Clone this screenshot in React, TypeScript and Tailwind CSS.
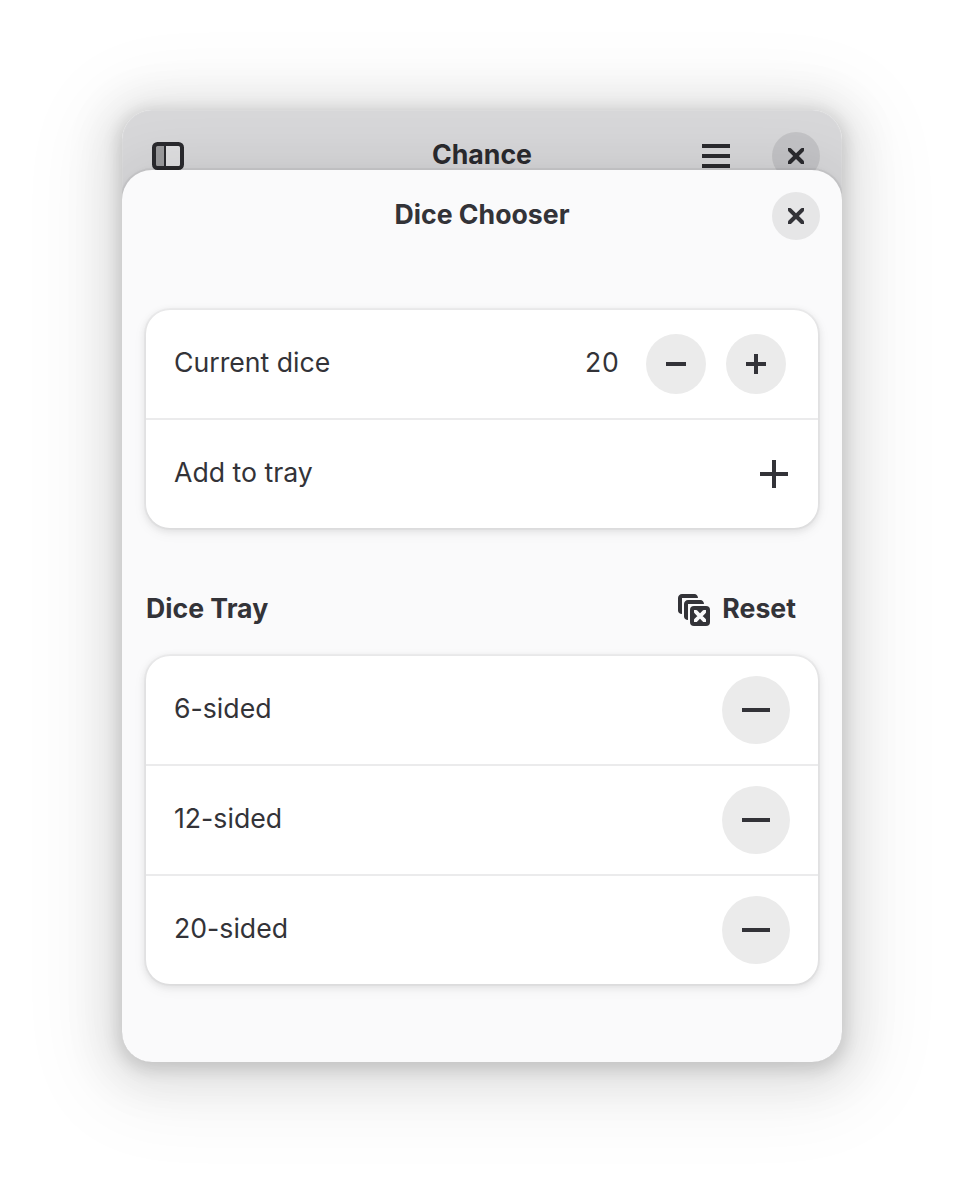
import type { ReactNode } from "react";

const CLOSE_PATH =
  "m 4 4 h 1 h 0.03125 c 0.253906 0.011719 0.511719 0.128906 0.6875 0.3125 l 2.28125 2.28125 l 2.3125 -2.28125 c 0.265625 -0.230469 0.445312 -0.304688 0.6875 -0.3125 h 1 v 1 c 0 0.285156 -0.035156 0.550781 -0.25 0.75 l -2.28125 2.28125 l 2.25 2.25 c 0.1875 0.1875 0.28125 0.453125 0.28125 0.71875 v 1 h -1 c -0.265625 0 -0.53125 -0.09375 -0.71875 -0.28125 l -2.28125 -2.28125 l -2.28125 2.28125 c -0.1875 0.1875 -0.453125 0.28125 -0.71875 0.28125 h -1 v -1 c 0 -0.265625 0.09375 -0.53125 0.28125 -0.71875 l 2.28125 -2.25 l -2.28125 -2.28125 c -0.210938 -0.195312 -0.304688 -0.46875 -0.28125 -0.75 z";

function Icon({ children }: { children: ReactNode }) {
  return (
    <svg viewBox="0 0 16 16" className="size-8 shrink-0" fill="currentColor" aria-hidden="true">
      {children}
    </svg>
  );
}

const CloseIcon = () => (
  <Icon>
    <path d={CLOSE_PATH} />
  </Icon>
);

const SidebarIcon = () => (
  <Icon>
    <rect x="7" y="2" width="7" height="11" fill="#ffffff" opacity="0.22" />
    <rect x="1.5" y="2" width="5" height="11" opacity="0.35" />
    <rect x="6" y="2" width="1" height="11" />
    <rect x="1" y="2" width="14" height="12" rx="1.75" fill="none" stroke="currentColor" strokeWidth="2" />
  </Icon>
);

const MenuIcon = () => (
  <Icon>
    <path d="M1 2h14v2H1zM1 7h14v2H1zM1 12h14v2H1z" />
  </Icon>
);

const ResetIcon = () => (
  <Icon>
    <path d="M2 0h6.2C9.2 0 10 .9 10 2H2v8C.9 10 0 9.200 0 8.200V2C0 .9.9 0 2 0z" />
    <path d="M5 3h6.200c1 0 1.800.9 1.800 2H5v8c-1.100 0-2-.8-2-1.800V5c0-1.100.9-2 2-2z" />
    <rect x="6" y="6" width="10" height="10" rx="2" />
    <path
      d={CLOSE_PATH}
      fill="#fafafb"
      stroke="#fafafb"
      strokeWidth="0.8"
      transform="translate(5.56 5.56) scale(0.68)"
    />
  </Icon>
);

const MinusSmall = () => (
  <Icon>
    <path d="M3 7h10v2H3z" />
  </Icon>
);

const PlusSmall = () => (
  <Icon>
    <path d="M7 3h2v4h4v2H9v4H7V9H3V7h4z" />
  </Icon>
);

const MinusLarge = () => (
  <Icon>
    <path d="M1 7h14v2H1z" />
  </Icon>
);

const PlusLarge = () => (
  <Icon>
    <path d="M7 1h2v6h6v2H9v6H7V9H1V7h6z" />
  </Icon>
);

function HeaderBar({ title, start, end }: { title: string; start?: ReactNode; end: ReactNode }) {
  return (
    <header className="grid h-[92px] grid-cols-[1fr_auto_1fr] items-center px-[22px]">
      <div className="flex items-center pl-2">{start}</div>
      <h1 className="pb-1 text-[26.67px] leading-8 font-bold">{title}</h1>
      <div className="flex items-center justify-end gap-10">{end}</div>
    </header>
  );
}

function List({ children }: { children: ReactNode }) {
  return (
    <ul className="rounded-[24px] bg-white shadow-[0_0_0_2px_rgba(0,0,6,0.03),0_2px_6px_2px_rgba(0,0,6,0.07),0_4px_12px_4px_rgba(0,0,6,0.03)]">
      {children}
    </ul>
  );
}

function Row({ label, children }: { label: string; children: ReactNode }) {
  return (
    <li className="flex h-[110px] items-center justify-between border-b-2 border-[#ebebec] px-7 last:h-[108px] last:border-b-0">
      <span className="pb-1">{label}</span>
      {children}
    </li>
  );
}

export default function App() {
  return (
    <main className="h-[1196px] w-[964px] bg-white px-[122px] pt-[110px] font-['Inter',sans-serif] text-[26.67px] leading-8 text-[#333338]">
      <div className="h-[952px] rounded-[30px] shadow-[0_4px_16px_4px_rgba(0,0,0,0.13),0_6px_40px_20px_rgba(0,0,0,0.08),0_12px_80px_34px_rgba(0,0,0,0.05)]">
        <div className="h-full overflow-hidden rounded-[30px] bg-[#d7d7d9] shadow-[inset_0_0_0_1px_rgba(255,255,255,0.1)]">
          <div className="h-[60px] text-[#2a2a2e]">
            <HeaderBar
              title="Chance"
              start={<SidebarIcon />}
              end={
                <>
                  <MenuIcon />
                  <button className="grid size-12 place-items-center rounded-full bg-[rgba(0,0,6,0.09)]">
                    <CloseIcon />
                  </button>
                </>
              }
            />
          </div>
          <section className="relative h-[892px] rounded-[30px] bg-[#fafafb] shadow-[0_0_60px_rgba(0,0,6,0.11),0_0_6px_rgba(0,0,6,0.05),0_0_0_2px_rgba(0,0,6,0.04)]">
            <HeaderBar
              title="Dice Chooser"
              end={
                <button className="grid size-12 place-items-center rounded-full bg-[#e6e6e7]">
                  <CloseIcon />
                </button>
              }
            />
            <div className="px-6 pt-12">
              <List>
                <Row label="Current dice">
                  <div className="flex items-center gap-5 pr-1">
                    <span className="pr-[7px] pb-1 tabular-nums">20</span>
                    <button className="grid size-[60px] place-items-center rounded-full bg-[#ebebeb]">
                      <MinusSmall />
                    </button>
                    <button className="grid size-[60px] place-items-center rounded-full bg-[#ebebeb]">
                      <PlusSmall />
                    </button>
                  </div>
                </Row>
                <Row label="Add to tray">
                  <PlusLarge />
                </Row>
              </List>
              <div className="flex h-32 items-center justify-between pt-9 pr-[22px] font-bold">
                <h2 className="pb-1">Dice Tray</h2>
                <button className="flex items-center gap-3">
                  <ResetIcon />
                  <span className="pb-1">Reset</span>
                </button>
              </div>
              <List>
                {["6-sided", "12-sided", "20-sided"].map((die) => (
                  <Row key={die} label={die}>
                    <button className="grid size-[68px] place-items-center rounded-full bg-[#ebebeb]">
                      <MinusLarge />
                    </button>
                  </Row>
                ))}
              </List>
            </div>
          </section>
        </div>
      </div>
    </main>
  );
}
